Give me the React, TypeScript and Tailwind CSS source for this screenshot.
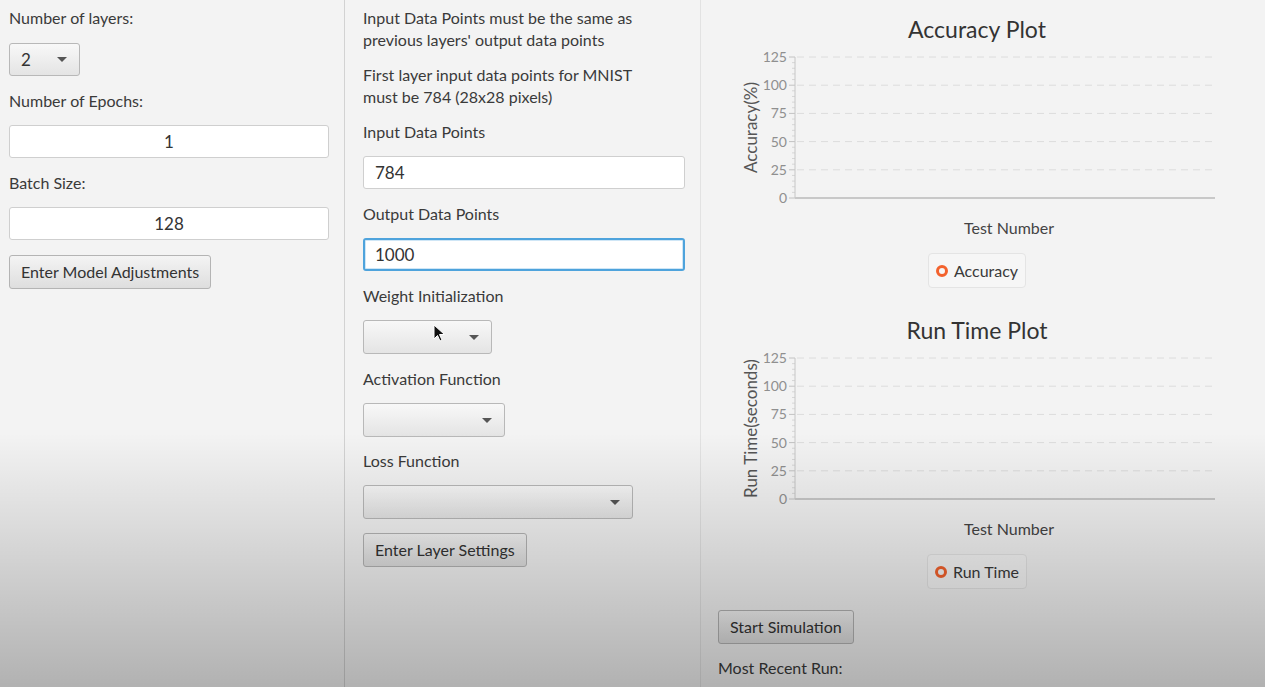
import React from "react";

const font = { fontFamily: "Lato, 'Open Sans', sans-serif" };

function Arrow() {
    return (
        <svg width="10" height="5" viewBox="0 0 10 5">
            <path d="M0 0h10L5 5z" fill="#555555" />
        </svg>
    );
}

// size holds width + height + margin classes
function Combo({ value, size }: { value?: string; size: string }) {
    return (
        <div className={`flex items-center justify-between rounded-[3px] border border-[#b8b8b8] bg-linear-to-b from-[#f8f8f8] to-[#e4e4e4] pl-[11px] pr-[12px] text-[17px] text-[#333] ${size}`}>
            <span>{value}</span>
            <Arrow />
        </div>
    );
}

function Field({ value, center, focused }: { value: string; center?: boolean; focused?: boolean }) {
    return (
        <div
            className={
                focused
                    ? "flex h-[33px] items-center rounded-[3px] border-2 border-[#4ea3dc] bg-white px-[10px] text-[17px] text-[#333] shadow-[inset_0_0_0_1px_#cfe6f6]"
                    : center
                        ? "flex h-[33px] items-center justify-center rounded-[3px] border border-[#cfcfcf] bg-white px-[11px] text-[17px] text-[#333]"
                        : "flex h-[33px] items-center rounded-[3px] border border-[#cfcfcf] bg-white px-[11px] text-[17px] text-[#333]"
            }
        >
            {value}
        </div>
    );
}

function Button({ label }: { label: string }) {
    return (
        <button className="h-[34px] w-fit rounded-[3px] border border-[#b4b4b4] bg-linear-to-b from-[#f4f4f4] to-[#dedede] px-[11px] text-[16px] text-[#333]">
            {label}
        </button>
    );
}

function Label({ text, className }: { text: string; className?: string }) {
    return <div className={`h-[20px] text-[16px] leading-[20px] text-[#3a3a3a] ${className ?? ""}`}>{text}</div>;
}

function Plot({ yLabel }: { yLabel: string }) {
    const majors = [125, 100, 75, 50, 25, 0];
    const top = 12;
    const bottom = 153;
    const left = 77;
    const right = 497;
    const step = (bottom - top) / 5;
    const minors: number[] = [];
    for (let i = 0; i < 5; i++) {
        for (let j = 1; j < 5; j++) minors.push(top + i * step + (j * step) / 5);
    }

    return (
        <svg width="518" height="195" className="block" style={font}>
            {majors.map((v, i) => {
                const y = top + i * step;
                return (
                    <g key={v}>
                        {i < 5 && (
                            <line x1={left + 2} x2={right} y1={y} y2={y} stroke="#dcdcdc" strokeDasharray="7 5" />
                        )}
                        <line x1={left - 6} x2={left} y1={y} y2={y} stroke="#c2c2c2" />
                        <text x={left - 8} y={y + 5} textAnchor="end" fontSize="14" fill="#8f8f8f">
                            {v}
                        </text>
                    </g>
                );
            })}
            {minors.map((y) => (
                <line key={y} x1={left - 3} x2={left} y1={y} y2={y} stroke="#d6d6d6" />
            ))}
            <line x1={left} x2={left} y1={top} y2={bottom} stroke="#c6c6c6" />
            <line x1={left} x2={right} y1={bottom} y2={bottom} stroke="#c8c8c8" strokeWidth="2" />
            <text
                transform={`translate(39 ${(top + bottom) / 2}) rotate(-90)`}
                textAnchor="middle"
                fontSize="17"
                fill="#555555"
            >
                {yLabel}
            </text>
            <text x={291} y={189} textAnchor="middle" fontSize="16" fill="#444444">
                Test Number
            </text>
        </svg>
    );
}

function Legend({ label }: { label: string }) {
    return (
        <div className="mx-auto flex h-[35px] items-center gap-[6px] rounded-[4px] border border-[#e4e4e4] bg-[#f6f6f6] px-[7px] text-[16px] text-[#3a3a3a]">
            <span className="h-[12px] w-[12px] rounded-full border-[3px] border-[#f3622d]" />
            <span>{label}</span>
        </div>
    );
}

export default function App() {
    return (
        <div className="relative flex h-[687px] w-[1265px] overflow-hidden bg-[#f3f3f3]" style={font}>
            {/* left column */}
            <div className="flex w-[345px] shrink-0 flex-col border-r border-[#d2d2d2] px-[9px] pt-[8px]">
                <Label text="Number of layers:" />
                <Combo value="2" size="w-[71px] h-[33px] mt-[15px]" />
                <Label text="Number of Epochs:" className="mt-[15px]" />
                <div className="mt-[14px] w-[320px]">
                    <Field value="1" center />
                </div>
                <Label text="Batch Size:" className="mt-[15px]" />
                <div className="mt-[14px] w-[320px]">
                    <Field value="128" center />
                </div>
                <div className="mt-[15px]">
                    <Button label="Enter Model Adjustments" />
                </div>
            </div>

            {/* middle column */}
            <div className="flex w-[356px] shrink-0 flex-col border-r border-[#e2e2e2] pl-[18px] pr-[15px] pt-[7px]">
                <div className="text-[16px] leading-[22px] text-[#3a3a3a]">
                    Input Data Points must be the same as
                    <br />
                    previous layers' output data points
                </div>
                <div className="mt-[13px] text-[16px] leading-[22px] text-[#3a3a3a]">
                    First layer input data points for MNIST
                    <br />
                    must be 784 (28x28 pixels)
                </div>
                <Label text="Input Data Points" className="mt-[14px]" />
                <div className="mt-[14px]">
                    <Field value="784" />
                </div>
                <Label text="Output Data Points" className="mt-[15px]" />
                <div className="mt-[14px]">
                    <Field value="1000" focused />
                </div>
                <Label text="Weight Initialization" className="mt-[15px]" />
                <div className="relative mt-[14px]">
                    <Combo size="w-[129px] h-[34px]" />
                    <svg className="absolute left-[70px] top-[4px]" width="12" height="18" viewBox="0 0 12 18">
                        <path d="M1 1v14l3.5-3.5 2.5 5.5 2-1-2.5-5.5h5z" fill="#111" stroke="#fff" strokeWidth="1" />
                    </svg>
                </div>
                <Label text="Activation Function" className="mt-[15px]" />
                <Combo size="w-[142px] h-[34px] mt-[14px]" />
                <Label text="Loss Function" className="mt-[14px]" />
                <Combo size="w-[270px] h-[34px] mt-[14px]" />
                <div className="mt-[14px]">
                    <Button label="Enter Layer Settings" />
                </div>
            </div>

            {/* right column */}
            <div className="flex flex-1 flex-col pl-[17px] pr-[30px]">
                <div className="mt-[14px] h-[30px] text-center text-[23px] leading-[30px] text-[#333]">Accuracy Plot</div>
                <div className="mt-[1px]">
                    <Plot yLabel="Accuracy(%)" />
                </div>
                <div className="mt-[13px] flex">
                    <Legend label="Accuracy" />
                </div>
                <div className="mt-[27px] h-[30px] text-center text-[23px] leading-[30px] text-[#333]">Run Time Plot</div>
                <div className="mt-[1px]">
                    <Plot yLabel="Run Time(seconds)" />
                </div>
                <div className="mt-[13px] flex">
                    <Legend label="Run Time" />
                </div>
                <div className="mt-[21px]">
                    <Button label="Start Simulation" />
                </div>
                <div className="mt-[14px] h-[20px] text-[16px] leading-[20px] text-[#3a3a3a]">Most Recent Run:</div>
            </div>

            {/* dim shading toward the bottom */}
            <div className="pointer-events-none absolute inset-0 bg-linear-to-b from-transparent from-[63%] to-black/[0.27]" />
        </div>
    );
}
